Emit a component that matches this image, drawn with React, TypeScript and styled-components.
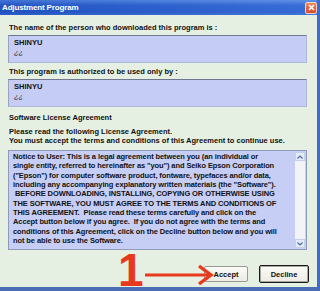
import styled, { createGlobalStyle } from "styled-components";

const GlobalStyle = createGlobalStyle`
  html, body {
    margin: 0;
    padding: 0;
    background: #e6f0e2;
  }
  * {
    box-sizing: border-box;
  }
`;

const licenseLines = [
  "Notice to User: This is a legal agreement between you (an individual or",
  'single entity, referred to hereinafter as "you") and Seiko Epson Corporation',
  '("Epson") for computer software product, fontware, typefaces and/or data,',
  'including any accompanying explanatory written materials (the "Software").',
  " BEFORE DOWNLOADING, INSTALLING, COPYING OR OTHERWISE USING",
  "THE SOFTWARE, YOU MUST AGREE TO THE TERMS AND CONDITIONS OF",
  "THIS AGREEMENT.  Please read these terms carefully and click on the",
  "Accept button below if you agree.  If you do not agree with the terms and",
  "conditions of this Agreement, click on the Decline button below and you will",
  "not be able to use the Software.",
];

function App() {
  return (
    <>
      <GlobalStyle />
      <Window>
        <TitleBar>
          <Title>Adjustment Program</Title>
          <CloseButton>
            <svg width="7" height="7" viewBox="0 0 7 7">
              <path d="M1 1 L6 6 M6 1 L1 6" stroke="#fff" strokeWidth="1.6" />
            </svg>
          </CloseButton>
        </TitleBar>
        <Body>
          <Label>The name of the person who downloaded this program is :</Label>
          <NameBox>
            <NameLine>SHINYU</NameLine>
            <Company>¿¿</Company>
          </NameBox>
          <Label top={4}>This program is authorized to be used only by :</Label>
          <NameBox>
            <NameLine>SHINYU</NameLine>
            <Company>¿¿</Company>
          </NameBox>
          <Label top={6}>Software License Agreement</Label>
          <Intro>
            <div>Please read the following License Agreement.</div>
            <div>You must accept the terms and conditions of this Agreement to continue use.</div>
          </Intro>
          <LicenseBox>
            <LicenseText>
              {licenseLines.map((line, i) => (
                <div key={i}>{line}</div>
              ))}
            </LicenseText>
            <ScrollBar>
              <ScrollArrow>
                <svg width="6" height="4" viewBox="0 0 6 4">
                  <path d="M0.5 3.5 L3 1 L5.5 3.5" fill="none" stroke="#4d6aa8" strokeWidth="1.2" />
                </svg>
              </ScrollArrow>
              <ScrollTrack />
              <ScrollArrow>
                <svg width="6" height="4" viewBox="0 0 6 4">
                  <path d="M0.5 0.5 L3 3 L5.5 0.5" fill="none" stroke="#4d6aa8" strokeWidth="1.2" />
                </svg>
              </ScrollArrow>
            </ScrollBar>
          </LicenseBox>
          <ButtonRow>
            <Marker>
              <MarkerDigit>1</MarkerDigit>
              <ArrowSvg width="70" height="22" viewBox="0 0 70 22">
                <path d="M0 11 L64 11" stroke="#e8391c" strokeWidth="3" />
                <path d="M54 2 L66 11 L54 20" fill="none" stroke="#e8391c" strokeWidth="3.4" strokeLinejoin="miter" />
              </ArrowSvg>
            </Marker>
            <Button>Accept</Button>
            <Button primary>Decline</Button>
          </ButtonRow>
        </Body>
      </Window>
    </>
  );
}
export default App;

const Window = styled.div`
  position: relative;
  width: 320px;
  height: 291px;
  display: flex;
  flex-direction: column;
  background: #e6f0e2;
  border-right: 3px solid #3d6cc9;
  border-bottom: 4px solid #4a6db5;
  font-family: "Liberation Sans", Arial, sans-serif;
  font-weight: bold;
  color: #111;
`;
const TitleBar = styled.div`
  height: 15px;
  display: flex;
  align-items: center;
  justify-content: space-between;
  padding: 0 0 0 2px;
  background: linear-gradient(90deg, rgba(0, 40, 160, 0.25), rgba(120, 170, 255, 0.15)),
    linear-gradient(180deg, #5b8fe6 0%, #2f64d0 35%, #2a5ecb 80%, #3b6fd6 100%);
`;
const Title = styled.span`
  color: #fff;
  font-size: 8px;
  letter-spacing: -0.15px;
`;
const CloseButton = styled.div`
  width: 12px;
  height: 12px;
  border: 1px solid #f4d4c4;
  border-radius: 2px;
  background: linear-gradient(180deg, #f08a60, #d8482a);
  display: flex;
  align-items: center;
  justify-content: center;
`;
const Body = styled.div`
  flex: 1;
  display: flex;
  flex-direction: column;
  padding: 8px 10px 0 8px;
  font-size: 7.5px;
`;
const Label = styled.div<{ top?: number }>`
  line-height: 10px;
  padding-left: 1px;
  margin-top: ${(p) => p.top ?? 0}px;
  margin-bottom: 2px;
`;
const NameBox = styled.div`
  height: 28px;
  padding: 2px 5px;
  background: #c5cdf6;
  border: 1px solid #b0b8d8;
  border-top-color: #6f7890;
  border-left-color: #9aa2bc;
`;
const NameLine = styled.div`
  line-height: 10px;
`;
const Company = styled.div`
  line-height: 10px;
  font-style: italic;
  font-weight: normal;
`;
const Intro = styled.div`
  line-height: 9px;
  padding-left: 1px;
  margin-top: 2px;
  margin-bottom: 5px;
`;
const LicenseBox = styled.div`
  height: 100px;
  display: flex;
  background: #c6cef6;
  border: 1px solid #8e9ab8;
`;
const LicenseText = styled.div`
  flex: 1;
  padding: 1px 0 0 4px;
  line-height: 9.33px;
  letter-spacing: -0.1px;
  white-space: pre;
  overflow: hidden;
`;
const ScrollBar = styled.div`
  width: 10px;
  margin: 1px 1px 1px 0;
  display: flex;
  flex-direction: column;
  background: #f2f4f8;
`;
const ScrollArrow = styled.div`
  height: 9px;
  display: flex;
  align-items: center;
  justify-content: center;
  background: #e4eaf6;
  border: 1px solid #c4d0e8;
`;
const ScrollTrack = styled.div`
  flex: 1;
`;
const ButtonRow = styled.div`
  position: relative;
  display: flex;
  justify-content: flex-end;
  align-items: center;
  gap: 11px;
  margin-top: 15px;
  margin-right: -2px;
`;
const Button = styled.div<{ primary?: boolean }>`
  height: ${(p) => (p.primary ? 18 : 16)}px;
  width: ${(p) => (p.primary ? 50 : 44)}px;
  display: flex;
  align-items: center;
  justify-content: center;
  font-size: 7.5px;
  background: linear-gradient(180deg, #fbfbf8, #ecebe4);
  border: 1px solid ${(p) => (p.primary ? "#1a1a1a" : "#9a9a94")};
  box-shadow: ${(p) => (p.primary ? "inset 0 0 0 1px #a8a8a0" : "none")};
  border-radius: 2px;
`;
const Marker = styled.div`
  position: absolute;
  left: 110px;
  top: -13px;
  display: flex;
  align-items: flex-start;
  pointer-events: none;
`;
const MarkerDigit = styled.span`
  color: #e8391c;
  font-size: 46px;
  line-height: 36px;
  font-weight: bold;
  margin-right: 1px;
`;
const ArrowSvg = styled.svg`
  margin-top: 12px;
`;
